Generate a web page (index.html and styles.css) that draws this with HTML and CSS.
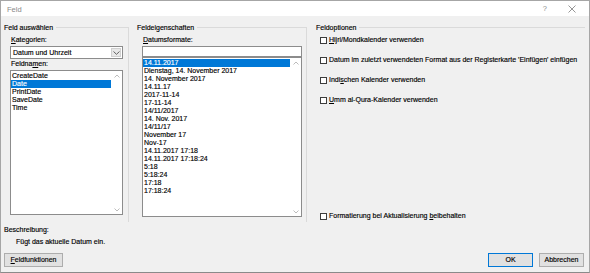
FILE: index.html
```html
<!DOCTYPE html>
<html lang="de">
<head>
<meta charset="utf-8">
<title>Feld</title>
<link rel="stylesheet" href="styles.css">
</head>
<body>
<div class="dialog">
  <div class="titlebar">
    <span class="title">Feld</span>
    <span class="help">?</span>
    <svg class="close" width="8" height="8" viewBox="0 0 8 8"><path d="M0.5 0.5 L7.5 7.5 M7.5 0.5 L0.5 7.5" stroke="#8a8a8a" stroke-width="0.9" fill="none"/></svg>
  </div>
  <div class="main">
    <section class="col col1">
      <div class="gh">Feld auswählen</div>
      <div class="inner">
        <div class="lbl"><u>K</u>ategorien:</div>
        <div class="select">
          <span class="sel-text">Datum und Uhrzeit</span>
          <span class="dd"><svg width="7" height="4" viewBox="0 0 7 4"><path d="M0.5 0.5 L3.5 3.3 L6.5 0.5" stroke="#555" stroke-width="0.9" fill="none"/></svg></span>
        </div>
        <div class="lbl lbl-names">Feldna<u>m</u>en:</div>
        <div class="listbox lb-names">
          <div class="items">
            <div class="item">CreateDate</div>
            <div class="item sel">Date</div>
            <div class="item">PrintDate</div>
            <div class="item">SaveDate</div>
            <div class="item">Time</div>
          </div>
          <div class="sb">
            <svg width="6" height="4" viewBox="0 0 6 4"><path d="M0.5 3.5 L3 1 L5.5 3.5" stroke="#b4b4b4" stroke-width="0.9" fill="none"/></svg>
            <svg width="6" height="4" viewBox="0 0 6 4"><path d="M0.5 0.5 L3 3 L5.5 0.5" stroke="#b4b4b4" stroke-width="0.9" fill="none"/></svg>
          </div>
        </div>
      </div>
    </section>
    <section class="col col2">
      <div class="gh">Feldeigenschaften</div>
      <div class="inner">
        <div class="lbl"><u>D</u>atumsformate:</div>
        <div class="input"></div>
        <div class="listbox lb-formats">
          <div class="items">
            <div class="item sel">14.11.2017</div>
            <div class="item">Dienstag, 14. November 2017</div>
            <div class="item">14. November 2017</div>
            <div class="item">14.11.17</div>
            <div class="item">2017-11-14</div>
            <div class="item">17-11-14</div>
            <div class="item">14/11/2017</div>
            <div class="item">14. Nov. 2017</div>
            <div class="item">14/11/17</div>
            <div class="item">November 17</div>
            <div class="item">Nov-17</div>
            <div class="item">14.11.2017 17:18</div>
            <div class="item">14.11.2017 17:18:24</div>
            <div class="item">5:18</div>
            <div class="item">5:18:24</div>
            <div class="item">17:18</div>
            <div class="item">17:18:24</div>
          </div>
          <div class="sb">
            <svg width="6" height="4" viewBox="0 0 6 4"><path d="M0.5 3.5 L3 1 L5.5 3.5" stroke="#b4b4b4" stroke-width="0.9" fill="none"/></svg>
            <svg width="6" height="4" viewBox="0 0 6 4"><path d="M0.5 0.5 L3 3 L5.5 0.5" stroke="#b4b4b4" stroke-width="0.9" fill="none"/></svg>
          </div>
        </div>
      </div>
    </section>
    <section class="col col3">
      <div class="gh">Feldoptionen</div>
      <div class="inner opts">
        <div class="chk"><span class="box"></span><span><u>H</u>ijri/Mondkalender verwenden</span></div>
        <div class="chk"><span class="box"></span><span>Datum im zuletzt verwendeten Format aus der Registerkarte 'Einfügen' einfügen</span></div>
        <div class="chk"><span class="box"></span><span>Indi<u>s</u>chen Kalender verwenden</span></div>
        <div class="chk"><span class="box"></span><span><u>U</u>mm al-Qura-Kalender verwenden</span></div>
        <div class="chk chk-last"><span class="box"></span><span>Formatierung bei Aktualisierung <u>b</u>eibehalten</span></div>
      </div>
    </section>
  </div>
  <div class="footer">
    <div class="desc-lbl">Beschreibung:</div>
    <div class="desc">Fügt das aktuelle Datum ein.</div>
    <div class="buttons">
      <button class="btn btn-wide"><u>F</u>eldfunktionen</button>
      <span class="spacer"></span>
      <button class="btn btn-default">OK</button>
      <button class="btn">Abbrechen</button>
    </div>
  </div>
</div>
</body>
</html>
```
FILE: styles.css
```css
* { box-sizing: border-box; }
html, body { margin: 0; padding: 0; background: #f0f0f0; }
u { text-decoration: underline; text-underline-offset: 1px; text-decoration-thickness: 1px; }

.dialog {
  width: 590px;
  height: 273px;
  border: 1px solid #a6a6a6;
  border-bottom-color: #8a8a8a;
  background: #f0f0f0;
  font-family: "Liberation Sans", Arial, sans-serif;
  font-size: 7px;
  line-height: 8px;
  color: #000;
  -webkit-text-stroke: 0.15px #000;
  display: flex;
  flex-direction: column;
}

.titlebar {
  height: 15px;
  background: #fff;
  display: flex;
  align-items: flex-start;
  padding: 5px 0 0 6px;
  color: #8a8a8a;
  -webkit-text-stroke: 0;
  font-size: 7.5px;
}
.title { flex: 1; }
.help { margin-right: 21px; margin-top: -1px; }
.close { margin-right: 13px; margin-top: -1px; }

.main {
  height: 206px;
  display: flex;
  padding: 8px 4px 0 3px;
}
.col {
  display: flex;
  flex-direction: column;
  background: linear-gradient(#dadada, #dadada) right 3px / 1px calc(100% - 3px) no-repeat;
}
.gh {
  height: 8px;
  display: flex;
  align-items: center;
  gap: 3px;
}
.gh::after {
  content: "";
  flex: 1;
  border-top: 1px solid #dadada;
  margin-top: -1px;
}
.col1 { width: 125px; }
.col1 .inner { padding: 4px 0 0 6px; }
.col2 { width: 178px; padding-left: 8px; }
.col2 .inner { padding: 4px 0 0 5px; }
.col3 { flex: 1; padding-left: 9px; background: none; }

.lbl { height: 8px; padding-left: 1px; }
.lbl-names { margin-top: 1px; }

.select {
  margin-top: 2px;
  width: 113px;
  height: 13px;
  border: 1px solid #8c8c8c;
  background: #fff;
  display: flex;
  align-items: center;
  padding: 0 1px 0 2px;
}
.sel-text { flex: 1; }
.dd {
  width: 10px;
  height: 9px;
  background: #e8e8e8;
  border: 1px solid #d0d0d0;
  display: flex;
  align-items: center;
  justify-content: center;
}

.listbox {
  border: 1px solid #8c8c8c;
  background: #fff;
  display: flex;
}
.lb-names { margin-top: 2px; width: 113px; height: 145px; }
.input {
  margin-top: 2px;
  width: 160px;
  height: 11px;
  border: 1px solid #8c8c8c;
  background: #fff;
}
.lb-formats { margin-top: 0; width: 160px; height: 160px; }
.items { flex: 1; padding-top: 1px; }
.item { height: 8px; padding-left: 1px; white-space: nowrap; }
.item.sel { background: #0078d7; color: #fff; -webkit-text-stroke-color: #fff; }
.sb {
  width: 11px;
  display: flex;
  flex-direction: column;
  justify-content: space-between;
  align-items: center;
  padding: 3px 0 2px;
}

.opts {
  flex: 1;
  display: flex;
  flex-direction: column;
  gap: 12px;
  padding: 4px 0 2px 4px;
}
.chk { height: 8px; display: flex; align-items: center; gap: 2px; white-space: nowrap; }
.chk-last { margin-top: auto; }
.box {
  width: 7px;
  height: 7px;
  border: 1px solid #3c3c3c;
  background: #fff;
  flex: none;
}

.footer {
  flex: 1;
  padding: 4px 5px 0 3px;
  display: flex;
  flex-direction: column;
}
.desc-lbl { height: 8px; }
.desc { height: 8px; margin-top: 4px; padding-left: 12px; }
.buttons { margin-top: 7px; display: flex; gap: 6px; }
.spacer { flex: 1; }
.btn {
  font: inherit;
  color: #000;
  height: 14px;
  width: 45px;
  padding: 0;
  background: #e1e1e1;
  border: 1px solid #adadad;
  line-height: 8px;
}
.btn-wide { width: 59px; }
.btn-default { border-color: #0078d7; }
```
